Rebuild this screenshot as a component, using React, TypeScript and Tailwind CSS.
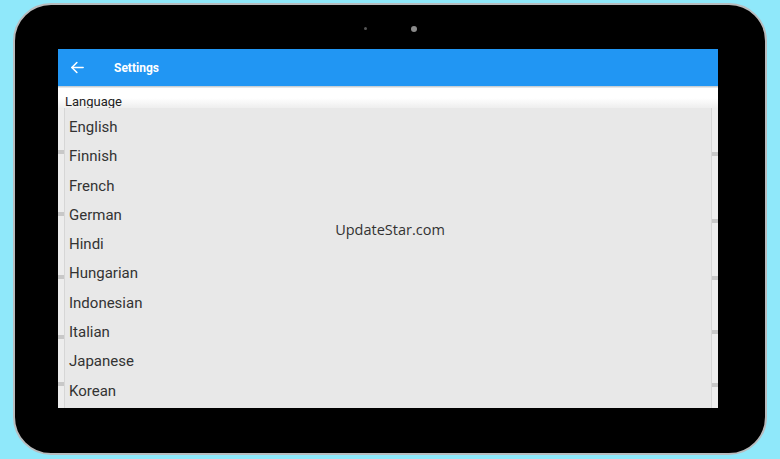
import React from "react";

const langs = [
  "English",
  "Finnish",
  "French",
  "German",
  "Hindi",
  "Hungarian",
  "Indonesian",
  "Italian",
  "Japanese",
  "Korean",
];

function Tick({ mt }: { mt: string }) {
  return <div className={`h-[4px] w-full bg-[#c8c8c8] ${mt}`} />;
}

export default function App() {
  return (
    <div
      className="w-[780px] h-[459px] bg-[#8fe8fa] pt-[3px] pl-[13px] overflow-hidden"
      style={{ fontFamily: "Roboto, 'Noto Sans', sans-serif" }}
    >
      <div className="w-[754px] h-[452px] rounded-[38px] border-2 border-[#b8bcbe] bg-black flex flex-col">
        <div className="h-[44px] flex justify-center items-start pt-[21px] gap-[44px]">
          <div className="w-[3px] h-[3px] mt-[1px] rounded-full bg-[#555]" />
          <div className="w-[6px] h-[6px] rounded-full bg-[#8a8a8a]" />
        </div>
        <div className="ml-[43px] w-[660px] h-[359px] flex flex-col">
          <div className="h-[37px] bg-[#2196f3] flex items-center pl-[12px]">
            <svg width="15" height="15" viewBox="0 0 24 24" fill="none" stroke="white" strokeWidth="2.5" strokeLinecap="round" strokeLinejoin="round">
              <path d="M21 12H3" />
              <path d="M11 4l-8 8 8 8" />
            </svg>
            <span className="ml-[29px] text-white text-[12px] font-bold">Settings</span>
          </div>
          <div className="h-[2px] bg-gradient-to-b from-[#b9c4cc] to-[#f4f4f4]" />
          <div className="h-[20px] pt-[7px] pl-[7px] bg-gradient-to-b from-white via-white to-[#eeeeee]">
            <div className="text-[13px] leading-[13px] text-[#222]">Language</div>
          </div>
          <div className="flex-1 bg-[#e8e8e8] flex">
            <div className="w-[6px] bg-[#ededed] flex flex-col">
              <Tick mt="mt-[42px]" />
              <Tick mt="mt-[58px]" />
              <Tick mt="mt-[59px]" />
              <Tick mt="mt-[56px]" />
              <Tick mt="mt-[43px]" />
            </div>
            <div className="flex-1 relative border-l border-[#d6d6d6] border-r pt-[5px] pl-[4px]">
              {langs.map((l) => (
                <div key={l} className="h-[29.3px] leading-[29.3px] text-[15px] text-[#333]">
                  {l}
                </div>
              ))}
              <div
                className="absolute left-1/2 -translate-x-1/2 top-[111px] text-[14.5px] text-[#333] whitespace-nowrap ml-[2px]"
                style={{ fontFamily: "'Open Sans', sans-serif" }}
              >
                UpdateStar.com
              </div>
            </div>
            <div className="w-[6px] bg-[#ededed] flex flex-col">
              <Tick mt="mt-[44px]" />
              <Tick mt="mt-[63px]" />
              <Tick mt="mt-[53px]" />
              <Tick mt="mt-[50px]" />
              <Tick mt="mt-[49px]" />
            </div>
          </div>
        </div>
      </div>
    </div>
  );
}
